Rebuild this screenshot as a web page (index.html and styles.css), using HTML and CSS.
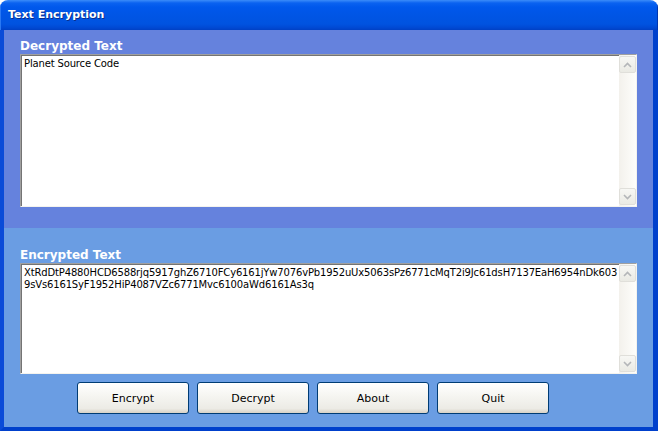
FILE: index.html
```html
<!DOCTYPE html>
<html>
<head>
<meta charset="utf-8">
<link rel="stylesheet" href="styles.css">
</head>
<body>
<div class="window">
  <div class="titlebar"><span class="title">Text Encryption</span></div>
  <div class="client">
    <div class="panel panel-top">
      <div class="label">Decrypted Text</div>
      <div class="textbox tall">
        <div class="content"><div class="line">Planet Source Code</div></div>
        <div class="scrollbar">
          <div class="sbtn"><svg width="9" height="6" viewBox="0 0 9 6"><path d="M1 5 L4.5 1.5 L8 5" fill="none" stroke="#B4B6B9" stroke-width="1.6"/></svg></div>
          <div class="track"></div>
          <div class="sbtn"><svg width="9" height="6" viewBox="0 0 9 6"><path d="M1 1 L4.5 4.5 L8 1" fill="none" stroke="#B4B6B9" stroke-width="1.6"/></svg></div>
        </div>
      </div>
    </div>
    <div class="panel panel-bottom">
      <div class="label">Encrypted Text</div>
      <div class="textbox short">
        <div class="content">
          <div class="line">XtRdDtP4880HCD6588rjq5917ghZ6710FCy6161jYw7076vPb1952uUx5063sPz6771cMqT2i9Jc61dsH7137EaH6954nDk603</div>
          <div class="line">9sVs6161SyF1952HiP4087VZc6771Mvc6100aWd6161As3q</div>
        </div>
        <div class="scrollbar">
          <div class="sbtn"><svg width="9" height="6" viewBox="0 0 9 6"><path d="M1 5 L4.5 1.5 L8 5" fill="none" stroke="#B4B6B9" stroke-width="1.6"/></svg></div>
          <div class="track"></div>
          <div class="sbtn"><svg width="9" height="6" viewBox="0 0 9 6"><path d="M1 1 L4.5 4.5 L8 1" fill="none" stroke="#B4B6B9" stroke-width="1.6"/></svg></div>
        </div>
      </div>
      <div class="buttons">
        <div class="btn">Encrypt</div>
        <div class="btn">Decrypt</div>
        <div class="btn">About</div>
        <div class="btn">Quit</div>
      </div>
    </div>
  </div>
</div>
</body>
</html>
```
FILE: styles.css
```css
html, body {
  margin: 0;
  padding: 0;
  background: #ffffff;
}
.window {
  width: 658px;
  height: 431px;
  display: flex;
  flex-direction: column;
  overflow: hidden;
  border-radius: 8px 8px 0 0;
}
.titlebar {
  height: 30px;
  flex: none;
  display: flex;
  align-items: center;
  padding-left: 8px;
  background: linear-gradient(to bottom, #3B8CF9 0px, #0A62F0 3px, #0058EC 7px, #0055E5 15px, #0053E0 24px, #0048D2 28px, #0040C4 30px);
  box-shadow: inset 1px 0 #2A78F2, inset -1px 0 #0036B0;
}
.title {
  font-family: "DejaVu Sans", sans-serif;
  font-weight: bold;
  font-size: 11px;
  color: #ffffff;
  text-shadow: 1px 1px 0 #0B2F8C;
  padding-bottom: 1px;
}
.client {
  flex: 1;
  display: flex;
  flex-direction: column;
  border-left: 4px solid #0A4BD8;
  border-right: 5px solid #0040CC;
  border-bottom: 4px solid #0040CC;
}
.panel {
  padding-left: 16px;
  box-sizing: border-box;
}
.panel-top {
  height: 198px;
  padding-top: 8px;
  background: #6582DD;
}
.panel-bottom {
  flex: 1;
  padding-top: 19px;
  background: #6A9DE3;
}
.label {
  height: 16px;
  font-family: "DejaVu Sans", sans-serif;
  font-weight: bold;
  font-size: 12px;
  line-height: 16px;
  color: #ffffff;
}
.textbox {
  width: 617px;
  box-sizing: border-box;
  display: flex;
  background: #ffffff;
  border-top: 1px solid #A0A0A0;
  border-left: 1px solid #A0A0A0;
  border-right: 1px solid #F4F3EE;
  border-bottom: 1px solid #F4F3EE;
  box-shadow: inset 1px 1px 0 #747474;
}
.tall { height: 153px; }
.short { height: 111px; }
.content {
  flex: 1;
  min-width: 0;
  overflow: hidden;
  padding: 3px 0 0 3px;
  font-family: "DejaVu Sans", sans-serif;
  font-size: 10px;
  line-height: 12px;
  color: #000000;
}
.line {
  white-space: nowrap;
  letter-spacing: -0.15px;
}
.scrollbar {
  width: 17px;
  flex: none;
  display: flex;
  flex-direction: column;
  padding: 1px 0 1px 0;
  background: linear-gradient(to right, #F3F1EC, #FEFEFB);
}
.track { flex: 1; }
.sbtn {
  width: 15px;
  height: 15px;
  border: 1px solid #E0DFDA;
  border-radius: 2px;
  background: linear-gradient(to bottom, #F7F7F4, #EAEAE4);
  display: flex;
  align-items: center;
  justify-content: center;
}
.buttons {
  display: flex;
  gap: 8px;
  margin-top: 8px;
  padding-left: 57px;
}
.btn {
  width: 112px;
  height: 32px;
  box-sizing: border-box;
  border: 1px solid #003C74;
  border-radius: 3px;
  background: linear-gradient(to bottom, #FFFFFF 0%, #F6F6F2 40%, #ECEBE5 85%, #D8D2C6 100%);
  display: flex;
  align-items: center;
  justify-content: center;
  font-family: "DejaVu Sans", sans-serif;
  font-size: 11px;
  color: #000000;
}
```
